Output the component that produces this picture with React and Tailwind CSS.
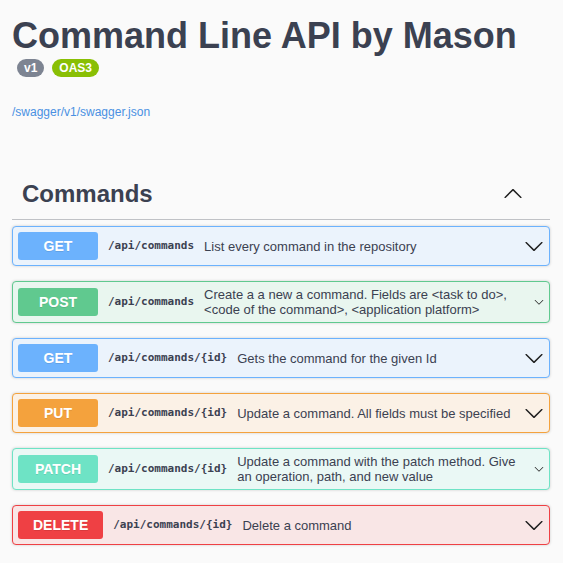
import React from "react";

const ops = [
  { method: "GET", path: "/api/commands", desc: "List every command in the repository", badge: "bg-[#6cb2fd]", row: "bg-[#ebf3fc] border-[#6cb2fd]" },
  { method: "POST", path: "/api/commands", desc: "Create a a new a command. Fields are <task to do>, <code of the command>, <application platform>", badge: "bg-[#60c98f]", row: "bg-[#e9f6ef] border-[#60c98f]", small: true },
  { method: "GET", path: "/api/commands/{id}", desc: "Gets the command for the given Id", badge: "bg-[#6cb2fd]", row: "bg-[#ebf3fc] border-[#6cb2fd]" },
  { method: "PUT", path: "/api/commands/{id}", desc: "Update a command. All fields must be specified", badge: "bg-[#f4a23d]", row: "bg-[#fbf1e6] border-[#f4a23d]" },
  { method: "PATCH", path: "/api/commands/{id}", desc: "Update a command with the patch method. Give an operation, path, and new value", badge: "bg-[#6ee3c5]", row: "bg-[#eaf8f5] border-[#6ee3c5]", small: true },
  { method: "DELETE", path: "/api/commands/{id}", desc: "Delete a command", badge: "bg-[#ef4044]", row: "bg-[#f9e6e6] border-[#ef4044]" },
];

const ARROW = "M17.418 6.109c.272-.268.709-.268.979 0s.271.701 0 .969l-7.908 7.83c-.27.268-.707.268-.979 0l-7.908-7.83c-.27-.268-.27-.701 0-.969.271-.268.709-.268.979 0L10 13.25l7.418-7.141z";

function Arrow({ size = 20, up = false, className = "" }) {
  return (
    <svg width={size} height={size} viewBox="0 0 20 20" className={`shrink-0 ${up ? "rotate-180" : ""} ${className}`}>
      <path d={ARROW} fill="#1f1f1f" />
    </svg>
  );
}

function Operation({ op }) {
  return (
    <div className={`flex items-center rounded-[4px] border p-[5px] mb-[15px] shadow-[0_0_3px_rgba(0,0,0,0.19)] ${op.row}`}>
      <div className={`min-w-[80px] h-[28px] px-[15px] flex items-center justify-center rounded-[3px] text-white text-[14px] font-bold [text-shadow:0_1px_0_rgba(0,0,0,0.1)] ${op.badge}`}>
        {op.method}
      </div>
      <div className="px-[10px] font-['DejaVu_Sans_Mono',monospace] text-[11px] font-semibold text-[#3b4151] whitespace-nowrap">
        {op.path}
      </div>
      <div className="flex-1 text-[13px] leading-[15px] text-[#3b4151]">{op.desc}</div>
      {op.small ? <Arrow size={10} className="ml-[4px]" /> : <Arrow />}
    </div>
  );
}

export default function App() {
  return (
    <div className="min-h-[563px] bg-[#fafafa] font-['Liberation_Sans',Arial,sans-serif] text-[#3b4151]">
      <div className="pl-[12px] pr-[13px] pt-[18px]">
        {/* Info */}
        <h2 className="text-[36px] leading-[36px] font-bold">Command Line API by Mason</h2>
        <div className="flex gap-[8px] ml-[5px] mt-[5px]">
          <span className="h-[18px] px-[7px] flex items-center rounded-full bg-[#7d8492] text-white text-[12px] font-bold">v1</span>
          <span className="h-[18px] px-[7px] flex items-center rounded-full bg-[#89bf04] text-white text-[12px] font-bold">OAS3</span>
        </div>
        <a className="block mt-[28px] text-[12px] leading-[14px] text-[#4990e2]">/swagger/v1/swagger.json</a>

        {/* Tag section */}
        <div className="mt-[53px]">
          <div className="flex items-center justify-between pl-[10px] pr-[27px] pt-[10px] pb-[13px] border-b border-[#3b4151]/30">
            <h3 className="text-[24px] leading-[24px] font-bold">Commands</h3>
            <Arrow up />
          </div>
          <div className="mt-[6px]">
            {ops.map((op, i) => (
              <Operation key={i} op={op} />
            ))}
          </div>
        </div>
      </div>
    </div>
  );
}
